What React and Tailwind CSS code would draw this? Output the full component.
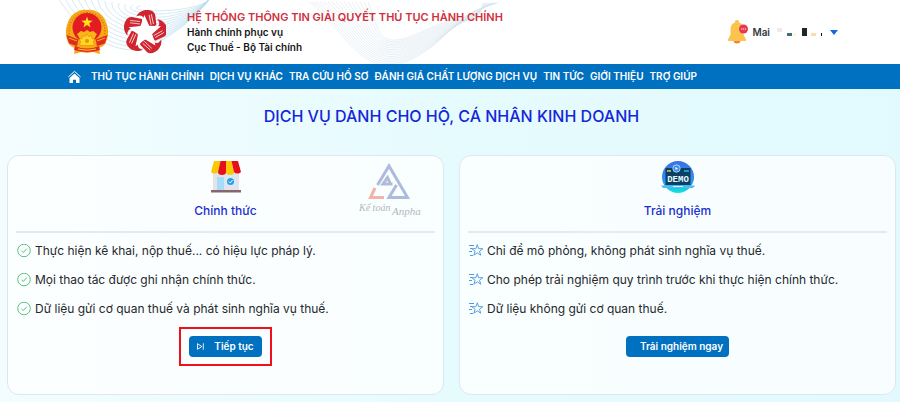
import React from "react";

const NAV = [
  "THỦ TỤC HÀNH CHÍNH",
  "DỊCH VỤ KHÁC",
  "TRA CỨU HỒ SƠ",
  "ĐÁNH GIÁ CHẤT LƯỢNG DỊCH VỤ",
  "TIN TỨC",
  "GIỚI THIỆU",
  "TRỢ GIÚP",
];

const OFFICIAL = [
  "Thực hiện kê khai, nộp thuế... có hiệu lực pháp lý.",
  "Mọi thao tác được ghi nhận chính thức.",
  "Dữ liệu gửi cơ quan thuế và phát sinh nghĩa vụ thuế.",
];

const TRIAL = [
  "Chỉ để mô phỏng, không phát sinh nghĩa vụ thuế.",
  "Cho phép trải nghiệm quy trình trước khi thực hiện chính thức.",
  "Dữ liệu không gửi cơ quan thuế.",
];

const STAR = "M0-10 2.3-3.2 9.5-3.1 3.8 1.2 5.9 8.1 0 4-5.9 8.1-3.8 1.2-9.5-3.1-2.3-3.2z";

function HeaderWaves() {
  return (
    <svg className="absolute inset-y-0 left-0 h-full w-[520px]" viewBox="0 0 520 64" fill="none" aria-hidden="true">
      {Array.from({ length: 13 }, (_, i) => (
        <path
          key={i}
          d={`M${56 + i * 7} ${-6 + i} C${78 + i * 4} ${34 - i * 2} ${120 + i * 3} ${60 - i * 4} ${150 + i * 2} ${46 - i * 3} S${196 + i} ${16 - i} ${212} -4`}
          stroke="#b5dbed"
          strokeWidth="0.6"
        />
      ))}
      {Array.from({ length: 16 }, (_, i) => (
        <path
          key={i}
          d={`M${308 + i * 4} 2 C${335 + i * 3} ${14 + i} ${360 + i} ${84 - i * 2} ${408 + i} ${61 - i * 2} S${446 + i * 2} ${16 + i} ${498 - i} 3`}
          stroke="#d9e6ee"
          strokeWidth="0.6"
        />
      ))}
    </svg>
  );
}

function NationalEmblem() {
  return (
    <svg className="h-[46px] w-11" viewBox="0 0 44 46" role="img" aria-label="Quốc huy">
      <path d="M11 34h22l2 11-7-2-6 1-6-1-7 2z" fill="#f5a716" />
      <path d="M22 1C30 0 38 5 41 13c3 7 3 15-1 22-2 3-7 5-11 4H15C11 40 6 38 4 35 0 28 0 20 3 13 6 5 14 0 22 1z" fill="#f6a915" />
      <path d="M22 3.500C12 3 4 12 4 22c0 7 4 13 9 15M22 3.500C32 3 40 12 40 22c0 7-4 13-9 15" fill="none" stroke="#d9701c" strokeWidth="1.600" strokeDasharray="1 1.800" />
      <circle cx="22" cy="18.500" r="14.500" fill="#e31b23" />
      <path d={STAR} transform="translate(22 13.500) scale(.6)" fill="#ffe31a" />
      <path d="M12 25c2-1 3-3 4-3l3 1 3-2 3 2 3-1c1 0 2 2 4 3l-4 7H16z" fill="#f8b51a" />
      <path d="m1.500 26 12 4.500L12 37l-8-2.500zM42.500 26l-12 4.500L32 37l8-2.500z" fill="#e12a22" />
      <path d="m4 29 8 3M40 29l-8 3" stroke="#f6a915" strokeWidth="1.200" />
      <path d="m22 25 1.500 2.500 3-1 .3 3 3 .8-1.600 2.700 1.600 2.700-3 .8H17.200l-3-.8L15.800 33l-1.600-2.700 3-.8.3-3 3 1z" fill="#ffd81f" stroke="#e8811c" strokeWidth=".6" />
      <circle cx="22" cy="32" r="2" fill="#f08a1c" />
      <path d="M10 37q12 5 24 0l1 4q-13 4-26 0z" fill="#e12a22" />
      <path d="M13 40q9 2.500 18 0" stroke="#ffd51c" strokeWidth="1" fill="none" />
    </svg>
  );
}

function ServiceLogo() {
  return (
    <svg className="h-[46px] w-[42px]" viewBox="-21 -22 42 44" role="img" aria-label="Hành chính phục vụ">
      {[0, 72, 144, 216, 288].map((a) => (
        <g key={a} transform={`rotate(${a})`}>
          <path d="M-3-13-13-15C-18-15.500-20.500-10-21-6-21.300-2-20 1-17.500 3.500-18-1-16-3-13-3L-3-4z" fill="#d0242f" />
          <path d="M-15-11.500-5-10.500M-15-9.200-5-8" stroke="#fff" strokeWidth=".7" />
        </g>
      ))}
      <path
        d="M0-17 4.400-6.100 16.200-5.300 7.100 2.300 10 13.800 0 7.500-10 13.800-7.100 2.300-16.200-5.300-4.400-6.100z"
        transform="rotate(-2)"
        fill="#fff"
      />
    </svg>
  );
}

function Bell() {
  return (
    <svg className="h-6 w-5" viewBox="1 0 20 24" aria-hidden="true">
      <path d="M6.500 20h7a3.500 3.500 0 0 1-7 0z" fill="#f0803c" />
      <path d="M10 0a2 2 0 0 1 2 2.500c3 .8 4.500 3.500 4.500 7v5l2.500 5c.3 1-.2 1.500-1 1.500H2c-.8 0-1.300-.5-1-1.500l2.500-5v-5c0-3.500 1.500-6.200 4.500-7A2 2 0 0 1 10 0z" fill="#fbc24c" />
      <circle cx="16.500" cy="9" r="4.500" fill="#e8384d" />
      <path d="M14 9h5" stroke="#fff" strokeWidth="1" strokeDasharray="1.200 .7" />
    </svg>
  );
}

function HomeIcon() {
  return (
    <svg className="h-[13px] w-[13px]" viewBox="0 0 13 13" fill="#fff" aria-hidden="true">
      <path d="M6.500 3.400 11.500 8V13H8V9.800H5V13H1.500V8z" />
      <path d="M.4 6.900 6.500 1.300l6.100 5.600" fill="none" stroke="#fff" strokeWidth="1" />
    </svg>
  );
}

function ShopIcon() {
  return (
    <svg className="h-8 w-8" viewBox="0 0 32 32" aria-hidden="true">
      <path d="M3 9h26v20H3z" fill="#e5e3ea" />
      <path d="M7 16h7v13H7z" fill="#a7dcf8" />
      <path d="M16 14h10v11H16z" fill="#d4ecf8" />
      <path d="M4 0h6.500L8 11a4 3 0 0 1-7 0z" fill="#fcc800" />
      <path d="M10.500 0H16v11a4 3 0 0 1-8 0z" fill="#e6101c" />
      <path d="M16 0h5.500L24 11a4 3 0 0 1-8 0z" fill="#fcc800" />
      <path d="M21.500 0H28l3 11a4 3 0 0 1-7 0z" fill="#e6101c" />
      <circle cx="20.500" cy="20.500" r="3.500" fill="#2f9be8" />
      <path d="m18.800 20.500 1.400 1.400 2.400-2.800" stroke="#fff" strokeWidth="1" fill="none" />
      <path d="M1 29h30v2.500H1z" fill="#8a6570" />
    </svg>
  );
}

function DemoIcon() {
  return (
    <svg className="h-8 w-[34px]" viewBox="0 0 34 32" aria-hidden="true">
      <defs>
        <linearGradient id="demo-disc" x1="0" y1="0" x2="0" y2="1">
          <stop offset="0" stopColor="#3f6fe6" />
          <stop offset=".6" stopColor="#2f8ff0" />
          <stop offset="1" stopColor="#12e6dc" />
        </linearGradient>
      </defs>
      <circle cx="17" cy="16" r="16" fill="url(#demo-disc)" />
      <path d="M4.500 7h25v17h-25z" fill="#0b3f63" />
      <path d="M6 10h4" stroke="#f5c542" strokeWidth="1.500" />
      <path d="M23 10h5" stroke="#19c5e0" strokeWidth="1.500" />
      <circle cx="15.500" cy="7.500" r="3.700" fill="#3c95e8" stroke="#b8e4fc" strokeWidth=".8" />
      <path d="m14.500 6 2.500 1.500-2.500 1.500z" fill="#fff" />
      <text x="17" y="21" textAnchor="middle" fontFamily="'Liberation Mono', monospace" fontSize="9" fontWeight="700" fill="#e6fbff">
        DEMO
      </text>
      <path d="M0 24.500h34l-2 2.500H2z" fill="#54b9f3" />
      <path d="M12 25.500h10" stroke="#c9f3ff" strokeWidth="1" />
    </svg>
  );
}

function Watermark() {
  return (
    <svg className="absolute right-5 top-1 h-16 w-[66px]" viewBox="0 0 66 64" fill="none" role="img" aria-label="Kế toán Anpha">
      <g stroke="#aebbdc" strokeWidth="3">
        <path d="M33 23 30.500 17.500 26 24H35.500" />
        <path d="M20.500 25 32 6 50.500 37.500H32L39.500 25" />
      </g>
      <path d="M18 28 13.500 37.500H27" stroke="#f3b3a9" strokeWidth="3" />
      <g fill="#b2b8bc" fontFamily="'Liberation Serif', serif" fontStyle="italic">
        <text x="2" y="51" fontSize="10">Kế toán</text>
        <text x="35" y="55" fontSize="11">Anpha</text>
      </g>
    </svg>
  );
}

function CheckIcon() {
  return (
    <svg className="h-3.5 w-3.5 shrink-0" viewBox="0 0 14 14" fill="none" stroke="#5cbf7e" aria-hidden="true">
      <circle cx="7" cy="6.500" r="6.300" strokeWidth="1" />
      <path d="m4.500 6.700 1.800 1.800 3.400-3.800" strokeWidth="1" />
    </svg>
  );
}

function FlyingStarIcon() {
  return (
    <svg className="h-3.5 w-3.5 shrink-0" viewBox="0 0 14 14" fill="none" stroke="#4f9ade" aria-hidden="true">
      <path d={STAR} transform="translate(8.300 6.500) scale(.58)" strokeWidth="1.600" strokeLinejoin="round" />
      <path d="M0 1.500h5M1 4.500h2M0 7.500h3M1 11.500h3" strokeWidth="1" />
    </svg>
  );
}

function SkipIcon() {
  return (
    <svg className="h-[7px] w-[7px]" viewBox="0 0 7 7" fill="none" stroke="#fff" aria-hidden="true">
      <path d="M.5.700 4.800 3.500.5 6.300zM6.300.3v6.400" strokeWidth=".9" />
    </svg>
  );
}

function ServiceCard({ icon, title, items, bullet, children }) {
  return (
    <section className="relative flex flex-col rounded-xl border border-[#dbe9ee] bg-white/75 px-2 pt-[5px] pb-7">
      <div className="flex justify-center">{icon}</div>
      <h2 className="mt-2 text-center text-xs leading-5 font-medium text-[#1a2fd0]">{title}</h2>
      <hr className="mt-2.5 border-t-2 border-[#e3ebf0]" />
      <ul className="mt-[3px] px-px">
        {items.map((item) => (
          <li key={item} className="flex h-[29px] items-center gap-1 text-xs text-[#25282c]">
            {bullet}
            <span>{item}</span>
          </li>
        ))}
      </ul>
      <div className="mt-1 flex h-[39px] items-center justify-center">{children}</div>
    </section>
  );
}

export default function App() {
  return (
    <div className="bg-[#e6fbfe] font-['Inter',sans-serif]">
      <header className="relative flex h-16 items-center justify-between bg-white pr-[62px] pl-[65px]">
        <HeaderWaves />
        <div className="relative flex items-center">
          <NationalEmblem />
          <div className="ml-[15px]">
            <ServiceLogo />
          </div>
          <div className="ml-[21px] text-[10px] leading-[15px] font-semibold text-[#151515]">
            <p className="text-[11px] text-[#d0303c]">HỆ THỐNG THÔNG TIN GIẢI QUYẾT THỦ TỤC HÀNH CHÍNH</p>
            <p>Hành chính phục vụ</p>
            <p>Cục Thuế - Bộ Tài chính</p>
          </div>
        </div>
        <button type="button" className="relative flex items-center gap-1 text-[10px] font-semibold text-[#333a44]">
          <Bell />
          <span>Mai</span>
          <svg className="h-3 w-[48px]" viewBox="0 0 48 12" aria-hidden="true">
            <path d="M3 2h5v4H3z" fill="#ececec" />
            <path d="M13 7h5v3h-5z" fill="#426c78" />
            <path d="M19 7h3v3h-3z" fill="#fbf8d8" />
            <path d="M28 2h5v8h-5z" fill="#1d262b" />
            <path d="M37 7h5v3h-5z" fill="#f6dfae" />
            <path d="M47 7h1v3h-1z" fill="#111" />
          </svg>
          <svg className="ml-1 h-[5px] w-2" viewBox="0 0 8 5" aria-hidden="true">
            <path d="M0 0h8L4 5z" fill="#1668dc" />
          </svg>
        </button>
      </header>

      <nav className="flex h-[25px] items-center gap-1.5 bg-[#0070c0] pl-[68px] text-[10px] font-semibold text-white">
        <a href="#" aria-label="Trang chủ" className="mr-1">
          <HomeIcon />
        </a>
        {NAV.map((item) => (
          <a key={item} href="#" className="whitespace-nowrap">
            {item}
          </a>
        ))}
      </nav>

      <main className="bg-linear-to-r from-[#f3fdff] via-[#e6fbfe] to-[#e2fafe] pr-1 pb-2 pl-[7px]">
        <h1 className="py-[15px] text-center text-base leading-6 font-medium text-[#1527d8]">
          DỊCH VỤ DÀNH CHO HỘ, CÁ NHÂN KINH DOANH
        </h1>
        <div className="mt-3 grid grid-cols-2 gap-[15px]">
          <ServiceCard icon={<ShopIcon />} title="Chính thức" items={OFFICIAL} bullet={<CheckIcon />}>
            <Watermark />
            <div className="border-2 border-[#f0101c] px-2 py-[7px]">
              <button type="button" className="flex h-[21px] items-center gap-2.5 rounded-sm bg-[#0070c0] px-2 text-[10px] font-semibold text-white">
                <SkipIcon />
                Tiếp tục
              </button>
            </div>
          </ServiceCard>
          <ServiceCard icon={<DemoIcon />} title="Trải nghiệm" items={TRIAL} bullet={<FlyingStarIcon />}>
            <button type="button" className="h-[21px] rounded-sm bg-[#0070c0] pr-1.5 pl-3.5 text-[10px] font-semibold text-white">
              Trải nghiệm ngay
            </button>
          </ServiceCard>
        </div>
      </main>
    </div>
  );
}
